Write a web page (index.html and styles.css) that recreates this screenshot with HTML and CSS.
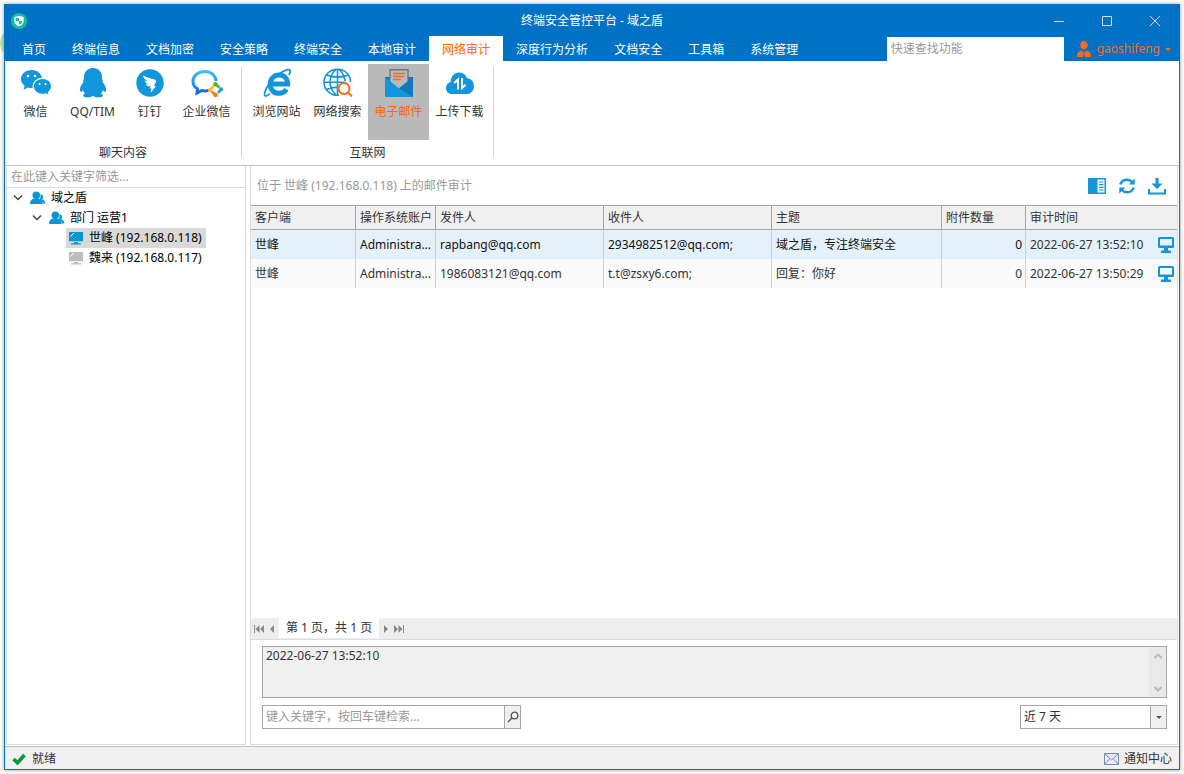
FILE: index.html
```html
<!DOCTYPE html>
<html lang="zh-CN">
<head>
<meta charset="utf-8">
<title>终端安全管控平台 - 域之盾</title>
<link rel="stylesheet" href="styles.css">
</head>
<body>
<svg class="defs" aria-hidden="true">
  <symbol id="people" viewBox="0 0 16 16">
    <path d="M10.300 4.300c1.700.1 2.800 1.200 2.800 2.700 0 .9-.4 1.600-1 2.200 2 .6 3.200 2 3.400 4.300h-2.600c-.2-2-1.300-3.300-3.200-4.300.9-1.200 1.100-3 .6-4.900z"/>
    <circle cx="6.300" cy="5.200" r="3.800"/>
    <path d="M0 14c0-3.200 1.500-5 4.300-5.400h4c2.800.4 4.300 2.200 4.300 5.400z"/>
  </symbol>
  <symbol id="pc" viewBox="0 0 16 16">
    <path d="M1 2h14v9.300H1zM6 12h4v1.300H6zM3 13.200h10v1.300H3z"/>
    <path class="glare" d="M2.500 6.500 6 3"/>
  </symbol>
  <symbol id="monitor" viewBox="0 0 16 16">
    <path fill-rule="evenodd" d="M1.500 0h13A1.500 1.500 0 0 1 16 1.500v8a1.500 1.500 0 0 1-1.500 1.500H10v2.500h3V16H3v-2.500h3V11H1.500A1.500 1.500 0 0 1 0 9.500v-8A1.500 1.500 0 0 1 1.500 0zM2 2v6.500h12V2z"/>
  </symbol>
</svg>

<div class="window">
  <header class="titlebar">
    <svg class="logo" viewBox="0 0 16 16" aria-hidden="true"><circle cx="8" cy="8" r="8" fill="#0cc39a"/><path d="M8 2.800 12.600 4v4.200c0 2.400-2 4-4.600 5.200-2.600-1.200-4.600-2.800-4.600-5.200V4z" fill="#fff"/><path d="M8 4.800V8H4.800V5.600zM8 8h3.200c0 1.700-1.200 2.800-3.200 3.700z" fill="#0cc39a"/></svg>
    <h1 class="title">终端安全管控平台 - 域之盾</h1>
    <div class="controls">
      <button class="control" aria-label="最小化"><svg viewBox="0 0 10 10"><path d="M0 5.500h10"/></svg></button>
      <button class="control" aria-label="最大化"><svg viewBox="0 0 10 10"><path d="M.5.500h9v9h-9z"/></svg></button>
      <button class="control" aria-label="关闭"><svg viewBox="0 0 10 10"><path d="M0 0l10 10M10 0 0 10"/></svg></button>
    </div>
  </header>

  <div class="menubar">
    <nav class="tabs">
      <button class="tab">首页</button>
      <button class="tab">终端信息</button>
      <button class="tab">文档加密</button>
      <button class="tab">安全策略</button>
      <button class="tab">终端安全</button>
      <button class="tab">本地审计</button>
      <button class="tab active">网络审计</button>
      <button class="tab">深度行为分析</button>
      <button class="tab">文档安全</button>
      <button class="tab">工具箱</button>
      <button class="tab">系统管理</button>
    </nav>
    <input class="quick-search" type="text" placeholder="快速查找功能" aria-label="快速查找功能">
    <button class="user">
      <svg class="icon16" viewBox="0 0 16 16" aria-hidden="true"><path fill="#ff6a13" d="M8 0c2.400 0 3.700 1.700 3.700 4S10.400 8.500 8 8.500 4.300 6.300 4.300 4 5.600 0 8 0zM1 16c0-4 1-5.600 4.600-6.600L8 12l2.400-2.600C14 10.400 15 12 15 16H9l-.6-3.300h-.8L7 16z"/></svg>
      <span>gaoshifeng</span>
      <span class="caret"></span>
    </button>
  </div>

  <div class="ribbon">
    <section class="group">
      <div class="tools chat">
        <button class="tool">
          <svg viewBox="0 0 32 32" aria-hidden="true"><path fill="#1296db" d="M11.500 3C5.500 3 1 7 1 12c0 2.800 1.300 5 3.600 6.700L3.500 23l4.200-2.500c1.300.4 2.500.5 3.900.5C17.500 21 22 17 22 12s-4.500-9-10.500-9z"/><path fill="#1296db" stroke="#fff" stroke-width="1.200" d="M22.500 11.300c-5.300 0-9.400 3.600-9.400 8s4.100 8.100 9.400 8.100c1.200 0 2.300-.2 3.400-.6l3.500 2-.9-3.300c2-1.500 3.200-3.700 3.200-6.200 0-4.400-4-8-9.200-8z"/><g fill="#fff"><circle cx="8" cy="9" r="1.300"/><circle cx="15" cy="9" r="1.300"/><circle cx="19.500" cy="17" r="1.100"/><circle cx="25.500" cy="17" r="1.100"/></g></svg>
          <span>微信</span>
        </button>
        <button class="tool">
          <svg viewBox="0 0 32 32" aria-hidden="true"><path fill="#1296db" d="M16 1c-5.500 0-9 4-9 9 0 1 .1 1.700-.4 2.600-.5 1-.6 1.700-.3 2.700C4.500 17.500 3 20 3 22.500c0 1.700.5 2.500 1 2.500.7 0 1.500-1 2-1.900.4 1.400 1 2.500 2.100 3.500-1.400.5-2 1.200-2 2 0 1.400 1.800 1.700 4.500 1.700 2.500 0 4.300-.4 5.400-1.500 1.100 1.100 2.900 1.500 5.400 1.500 2.700 0 4.500-.3 4.500-1.700 0-.8-.6-1.500-2-2 1.100-1 1.700-2.100 2.100-3.500.5.900 1.300 1.900 2 1.900.5 0 1-.8 1-2.500 0-2.500-1.500-5-3.300-7.200.3-1 .2-1.700-.3-2.700-.5-.9-.4-1.600-.4-2.600 0-5-3.500-9-9-9z"/></svg>
          <span>QQ/TIM</span>
        </button>
        <button class="tool">
          <svg viewBox="0 0 32 32" aria-hidden="true"><circle cx="16" cy="16" r="13.700" fill="#1296db"/><path fill="#fff" d="M9 8.500c3.500 1.700 7.500 2.900 11.500 4.100 1.500.5 1.800 1.100 1.300 2.300L20 19h2L16.500 26l1-4.500h-1.700l.9-2.400c-2.600.6-3.800 0-4.800-1.800l2.900.1c-2.500-.8-3.700-1.900-4.200-3.900l3.500.9C11 12.500 9.200 11.300 9 8.500z"/></svg>
          <span>钉钉</span>
        </button>
        <button class="tool">
          <svg viewBox="0 0 32 32" aria-hidden="true"><defs><linearGradient id="blue" x1="0" y1="0" x2="0" y2="1"><stop offset="0" stop-color="#42bcff"/><stop offset="1" stop-color="#1268e0"/></linearGradient></defs><path fill="none" stroke="url(#blue)" stroke-width="3" d="M25 14C24.600 8.200 20 4.500 14 4.500 7 4.500 2 8.600 2 14.200c0 3.500 1.700 6 4.500 7.700L6 26l4.500-2.500c2.500.6 4.600.5 7-.1"/><g stroke-width="2.600"><path stroke="#3dbd27" d="m24.500 17 4 3.500"/><path stroke="#2196ef" d="m30.500 22-3.600 4"/><path stroke="#fb7a18" d="m24.500 28-4-3.400"/><path stroke="#fcb61a" d="m19 23 3.600-4"/></g><circle cx="24.500" cy="17.200" r="2.200" fill="#3dbd27"/><circle cx="30" cy="22.200" r="2" fill="#2196ef"/><circle cx="24.500" cy="28" r="2.200" fill="#fb7a18"/><circle cx="19" cy="23" r="2" fill="#fcb61a"/></svg>
          <span>企业微信</span>
        </button>
      </div>
      <h2 class="group-name">聊天内容</h2>
    </section>
    <span class="divider"></span>
    <section class="group">
      <div class="tools web">
        <button class="tool">
          <svg viewBox="0 0 32 32" aria-hidden="true"><path fill="none" stroke="#1296db" stroke-width="5" d="M9.500 17h17.200c0-5.600-3.600-9-8.700-9s-8.800 3.900-8.800 9.300c0 5.500 3.700 9 8.800 9 3.600 0 6-1.600 7.400-4"/><path fill="none" stroke="#1296db" stroke-width="1.700" d="M9 26.500c-3.500 3.300-6.300 3.700-5.300-.8C5 20 11 12 18 7c5.500-4 11-6 11.300-3 .1 1.200-.4 2.500-1.400 4"/></svg>
          <span>浏览网站</span>
        </button>
        <button class="tool">
          <svg viewBox="0 0 32 32" aria-hidden="true"><g fill="none" stroke="#1296db" stroke-width="1.600"><path d="M17 28.200c-8.500.8-15-5.500-15-13C2 8 8 2.200 15.500 2.200S28.500 8 28.500 15M15.500 2v26M14 2.500c-8 7-8 18 0 25.500M17 2.500c4 3.500 6 7.500 6 12M2 15.200h20M4.500 8c6 2.500 16 2.500 22 0M4.500 22.500c4-1.800 8-2.300 12-2"/></g><g fill="none" stroke="#ff6a13" stroke-width="2"><circle cx="22" cy="21.500" r="5.500"/><path d="m26 25.500 4 4"/></g></svg>
          <span>网络搜索</span>
        </button>
        <button class="tool selected">
          <svg viewBox="0 0 32 32" aria-hidden="true"><path fill="#0d7bbb" d="M2 10h28v20H2z"/><path fill="#b9b9b9" stroke="#6c7789" stroke-width="1.400" d="M7 22V2.700h18V22"/><path fill="#b9b9b9" d="M7.800 12h16.400v7l-8 3-8.400-3z"/><path fill="#0d7bbb" d="M30 10v20H16l-1-8z"/><path fill="#1296db" d="M2 10v20h28L15.500 21z"/><path stroke="#ff6a13" stroke-width="1.500" d="M10 6.500h12M10 9.500h11M10 12.500h8"/></svg>
          <span>电子邮件</span>
        </button>
        <button class="tool">
          <svg viewBox="0 0 32 32" aria-hidden="true"><path fill="#1296db" d="M8 27c-3.700 0-6-2.600-6-6 0-3.300 2-5.500 4.600-6C7 9 10.500 5.500 15 5.500c4 0 6.800 2 8 5.800 4.300.3 7 3.500 7 7.700 0 4.600-3 8-7.300 8z"/><path fill="none" stroke="#fff" stroke-width="2" d="M14 22.500V12.500L10.200 16M18 11v10l3.600-3.200"/></svg>
          <span>上传下载</span>
        </button>
      </div>
      <h2 class="group-name">互联网</h2>
    </section>
    <span class="divider"></span>
  </div>

  <div class="workspace">
    <aside class="sidebar">
      <input class="filter" type="text" placeholder="在此键入关键字筛选..." aria-label="在此键入关键字筛选">
      <ul class="tree">
        <li>
          <div class="node"><svg class="arrow" viewBox="0 0 10 10"><path d="m1 2.500 4 4 4-4"/></svg><svg class="icon16 blue"><use href="#people"/></svg><span>域之盾</span></div>
          <ul>
            <li>
              <div class="node"><svg class="arrow" viewBox="0 0 10 10"><path d="m1 2.500 4 4 4-4"/></svg><svg class="icon16 blue"><use href="#people"/></svg><span>部门 运营1</span></div>
              <ul>
                <li><div class="node leaf current"><svg class="icon16 blue"><use href="#pc"/></svg><span>世峰 (192.168.0.118)</span></div></li>
                <li><div class="node leaf"><svg class="icon16 grey"><use href="#pc"/></svg><span>魏来 (192.168.0.117)</span></div></li>
              </ul>
            </li>
          </ul>
        </li>
      </ul>
    </aside>

    <main class="main">
      <div class="heading">
        <p class="location">位于 世峰 (192.168.0.118) 上的邮件审计</p>
        <button class="action" aria-label="详情"><svg viewBox="0 0 18 18"><path d="M0 1h18v16H0z"/><path d="M9.500 2.500h7v13h-7z" fill="#fff"/><path d="M11 5h4.500M11 7.700h4.500M11 10.300h4.500M11 13h4.500" stroke="#1296db" stroke-width="1.200"/></svg></button>
        <button class="action" aria-label="刷新"><svg viewBox="0 0 18 18"><g fill="none" stroke="#1296db" stroke-width="2.400"><path d="M2.300 7.500C3.200 4.500 5.700 2.700 9 2.700c2.300 0 4 .8 5.500 2.500M15.700 10.500c-.9 3-3.400 4.800-6.700 4.800-2.300 0-4-.8-5.500-2.500"/></g><path d="M16.700 1.500v6h-6zM1.300 16.500v-6h6z"/></svg></button>
        <button class="action" aria-label="导出"><svg viewBox="0 0 18 18"><path d="M7.500 1h3v5.500h4L9 12 3.500 6.500h4zM0 12h2v3.500h14V12h2v5.500H0z"/></svg></button>
      </div>
      <div class="table-area">
        <table class="records">
          <colgroup><col class="c-client"><col class="c-account"><col class="c-mail"><col class="c-mail"><col class="c-subject"><col class="c-count"><col class="c-time"></colgroup>
          <thead>
            <tr><th>客户端</th><th>操作系统账户</th><th>发件人</th><th>收件人</th><th>主题</th><th>附件数量</th><th>审计时间</th></tr>
          </thead>
          <tbody>
            <tr class="picked"><td>世峰</td><td>Administra...</td><td>rapbang@qq.com</td><td>2934982512@qq.com;</td><td>域之盾，专注终端安全</td><td class="num">0</td><td><div class="time"><span>2022-06-27 13:52:10</span><svg class="icon16 sky"><use href="#monitor"/></svg></div></td></tr>
            <tr><td>世峰</td><td>Administra...</td><td>1986083121@qq.com</td><td>t.t@zsxy6.com;</td><td>回复：你好</td><td class="num">0</td><td><div class="time"><span>2022-06-27 13:50:29</span><svg class="icon16 sky"><use href="#monitor"/></svg></div></td></tr>
          </tbody>
        </table>
      </div>
      <div class="pager">
        <button class="page-btn" aria-label="首页"><svg viewBox="0 0 10 8"><path d="M0 0h1v8H0zM5.500 0v8L1.500 4zM10 0v8L6 4z"/></svg></button>
        <button class="page-btn small" aria-label="上一页"><svg viewBox="0 0 4 8"><path d="M4 0v8L0 4z"/></svg></button>
        <span class="page-text">第 1 页，共 1 页</span>
        <button class="page-btn small" aria-label="下一页"><svg viewBox="0 0 4 8"><path d="M0 0v8l4-4z"/></svg></button>
        <button class="page-btn" aria-label="末页"><svg viewBox="0 0 10 8"><path d="M9 0h1v8H9zM0 0v8l4-4zM4.500 0v8l4-4z"/></svg></button>
      </div>
      <div class="details">
        <div class="memo">
          <textarea class="memo-text" readonly aria-label="详细内容">2022-06-27 13:52:10</textarea>
          <div class="scroll">
            <button aria-label="向上滚动"><svg viewBox="0 0 8 6"><path d="m.5 5 3.500-3.500L7.500 5"/></svg></button>
            <button aria-label="向下滚动"><svg viewBox="0 0 8 6"><path d="M.5 1 4 4.500 7.500 1"/></svg></button>
          </div>
        </div>
        <div class="query">
          <div class="field search">
            <input type="text" placeholder="键入关键字，按回车键检索..." aria-label="键入关键字检索">
            <button class="field-btn" aria-label="检索"><svg viewBox="0 0 12 12"><circle cx="7.500" cy="4.500" r="3.300"/><path d="M5 7 1 11"/></svg></button>
          </div>
          <div class="field range">
            <select aria-label="时间范围"><option>近 7 天</option></select>
            <span class="field-btn drop"><span class="caret"></span></span>
          </div>
        </div>
      </div>
    </main>
  </div>

  <footer class="status">
    <svg class="check" viewBox="0 0 14 12" aria-hidden="true"><path d="m1.500 6 4 3.800L12.500 2" fill="none" stroke="#069a3c" stroke-width="3.600"/></svg>
    <span>就绪</span>
    <button class="notice">
      <svg viewBox="0 0 15 12" aria-hidden="true"><path d="M.5.500h14v11H.5z" fill="#e9edf8" stroke="#7a88b4"/><path d="m1 1 6.500 6L14 1M1 11l4.500-5M14 11 9.500 6" fill="none" stroke="#7a88b4"/></svg>
      <span>通知中心</span>
    </button>
  </footer>
</div>
</body>
</html>
```

FILE: styles.css
```css
* { box-sizing: border-box; }

body {
  margin: 0;
  padding: 4px;
  background: #fff;
  color: #333;
  font: 12px/16px "Noto Sans", "Noto Sans CJK SC", sans-serif;
}

/* Desktop accent that peeks out behind the window */
body::before {
  content: "";
  position: absolute;
  left: 0;
  top: 28px;
  width: 30px;
  height: 30px;
  border-radius: 50%;
  background: #c5e5a4;
}

h1, h2, p, ul { margin: 0; padding: 0; font-size: 12px; font-weight: 400; }
ul { list-style: none; }
button, input, select, textarea { font: inherit; color: inherit; border: 0; border-radius: 0; padding: 0; margin: 0; background: none; outline: 0; }
svg { display: block; flex: none; }
.defs { position: absolute; width: 0; height: 0; }
.icon16 { width: 16px; height: 16px; }
.blue { fill: #0897d4; }
.grey { fill: #bdbdbd; }
.sky { fill: #1296db; }
.glare { stroke: #fff; stroke-width: 1px; fill: none; }

.window {
  position: relative;
  display: flex;
  flex-direction: column;
  min-height: calc(100vh - 8px);
  border: 1px solid #0072c6;
  background: #fff;
  box-shadow: 0 0 4px rgba(0, 0, 0, 0.4);
}

/* Title bar */
.titlebar { display: grid; grid-template-columns: 1fr auto 1fr; align-items: center; height: 31px; background: #0072c6; color: #fff; }
.logo { width: 16px; height: 16px; margin-left: 6px; }
.controls { display: flex; justify-content: flex-end; }
.control { display: grid; place-items: center; width: 48px; height: 30px; }
.control svg { width: 10px; height: 10px; fill: none; stroke: #d0dbe6; }

/* Menu tabs */
.menubar { display: flex; align-items: stretch; height: 25px; background: #0072c6; color: #fff; }
.tabs { display: flex; flex: 1; padding-left: 4px; }
.tab { padding: 2px 13px 0; white-space: nowrap; }
.tab.active { background: #fff; color: #f60; }
.quick-search { width: 177px; margin-top: 1px; padding: 0 4px; background: #fff; color: #333; }
::placeholder { color: #999; opacity: 1; }
.user { display: flex; align-items: center; gap: 5px; padding: 1px 8px 0 12px; color: #ff6a13; }
.caret { border: 3px solid transparent; border-top-color: currentColor; border-bottom: 0; }

/* Ribbon */
.ribbon { display: flex; padding: 3px 0 4px; border-bottom: 1px solid #c6c6c6; }
.group { text-align: center; }
.chat { padding: 0 6px 0 2px; }
.web { padding: 0 3px 0 4px; }
.tools { display: flex; }
.tool { display: flex; flex-direction: column; align-items: center; gap: 5px; height: 76px; padding-top: 3px; white-space: nowrap; }
.chat .tool { width: 57px; }
.web .tool { width: 61px; }
.tool svg { width: 32px; height: 32px; }
.tool.selected { background: #b9b9b9; color: #f60; }
.group-name { padding-top: 5px; line-height: 16px; }
.divider { width: 1px; margin: 3px 0; background: #d4d4d4; }

/* Work area */
.workspace { display: flex; flex: 1; gap: 4px; padding: 0 1px 1px; background: #fff; }
.sidebar { flex: none; width: 240px; border: 1px solid #dcdcdc; border-top: 0; }
.filter { width: 100%; height: 22px; padding: 0 4px; border-bottom: 1px solid #dcdcdc; }
.tree { color: #000; }
.tree ul { padding-left: 19px; }
.node { display: flex; align-items: center; gap: 5px; height: 20px; padding-left: 6px; white-space: nowrap; }
.arrow { width: 10px; height: 10px; margin-right: 2px; fill: none; stroke: #444; stroke-width: 1.5px; }
.leaf { width: max-content; margin-left: 21px; padding: 0 4px 0 2px; }
.current { background: #d9d9d9; }

.main { display: flex; flex: 1; flex-direction: column; min-width: 0; border: 1px solid #dcdcdc; border-top: 0; }
.heading { display: flex; align-items: center; gap: 12px; height: 39px; padding: 0 11px 0 6px; color: #999; }
.location { flex: 1; }
.action svg { width: 18px; height: 18px; fill: #1296db; }

.table-area { flex: 1; }
.records { width: 100%; table-layout: fixed; border-collapse: separate; border-spacing: 0; }
.c-client { width: 105px; }
.c-account { width: 80px; }
.c-mail { width: 168px; }
.c-subject { width: 170px; }
.c-count { width: 84px; }
.records th { height: 25px; padding: 0 0 0 4px; background: #f0f0f0; border: solid #a6a6a6; border-width: 1px 1px 1px 0; font-weight: 400; text-align: left; white-space: nowrap; overflow: hidden; }
.records td { height: 29px; padding: 0 3px 0 4px; background: #fafafa; border-right: 1px solid #d0d0d0; white-space: nowrap; overflow: hidden; }
.records th:last-child, .records td:last-child { border-right: 0; }
.records .picked td { background: #e5f1fa; color: #111; }
.records .num { text-align: right; }
.time { display: flex; align-items: center; justify-content: space-between; color: #333; }

/* Pager */
.pager { display: flex; align-items: stretch; height: 22px; padding-left: 2px; background: #eee; border-bottom: 1px solid #dcdcdc; }
.page-btn { display: grid; place-items: center; width: 12px; }
.page-btn.small { width: 14px; }
.page-btn svg { width: 10px; height: 8px; fill: #888; }
.page-btn.small svg { width: 4px; }
.page-text { margin-bottom: 1px; padding: 0 7px; background: #fff; line-height: 20px; }

/* Record details and query row */
.details { display: flex; flex-direction: column; gap: 7px; padding: 6px 10px 15px 11px; }
.memo { display: flex; height: 52px; border: 1px solid #a6a6a6; background: #f0f0f0; }
.memo-text { flex: 1; padding: 1px 3px; resize: none; overflow: hidden; }
.scroll { display: flex; flex-direction: column; justify-content: space-between; width: 17px; background: #e9e9e9; }
.scroll button { display: grid; place-items: center; height: 17px; }
.scroll svg { width: 8px; height: 6px; fill: none; stroke: #bbb; stroke-width: 2px; }
.query { display: flex; justify-content: space-between; }
.field { display: flex; height: 24px; border: 1px solid #a6a6a6; background: #fff; }
.field input, .field select { flex: 1; min-width: 0; padding: 0 3px; appearance: none; }
.search { width: 259px; }
.range { position: relative; width: 147px; }
.range select { padding-right: 18px; }
.field-btn { display: grid; place-items: center; width: 16px; border-left: 1px solid #a6a6a6; background: #f0f0f0; }
.field-btn svg { width: 12px; height: 12px; fill: none; stroke: #555; stroke-width: 1.3px; }
.drop { position: absolute; top: 0; right: 0; bottom: 0; color: #555; pointer-events: none; }

/* Status bar */
.status { display: flex; align-items: center; gap: 6px; height: 23px; padding: 1px 7px 0; background: #f0f0f0; border-top: 1px solid #c0c0c0; }
.check { width: 14px; height: 12px; }
.notice { display: flex; align-items: center; gap: 5px; margin-left: auto; }
.notice svg { width: 15px; height: 12px; }
```
